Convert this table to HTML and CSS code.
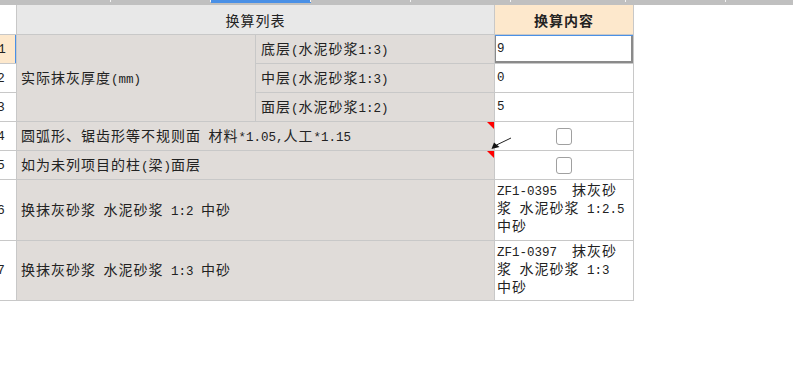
FILE: index.html
```html
<!DOCTYPE html>
<html lang="zh-CN">
<head>
<meta charset="utf-8">
<title>换算列表</title>
<link rel="stylesheet" href="styles.css">
</head>
<body>
<div class="colbar">
  <span class="seg w111"></span>
  <span class="seg"></span>
  <span class="seg active"></span>
  <span class="seg"></span>
  <span class="seg"></span>
  <span class="seg w115"></span>
  <span class="seg"></span>
  <span class="seg rest"></span>
</div>

<div class="sheet">
  <div class="grid">
    <div class="rn head"></div>
    <div class="head span2 center"><span class="t">换算列表</span></div>
    <div class="head peach center bold"><span class="t">换算内容</span></div>

    <div class="rn sel"><span>1</span></div>
    <div class="c merge"><span class="t">实际抹灰厚度<span class="a">(mm)</span></span></div>
    <div class="c sub"><span class="t">底层<span class="a">(</span>水泥砂浆<span class="a">1:3)</span></span></div>
    <div class="v cur"><span class="t a">9</span></div>

    <div class="rn"><span>2</span></div>
    <div class="c sub"><span class="t">中层<span class="a">(</span>水泥砂浆<span class="a">1:3)</span></span></div>
    <div class="v"><span class="t a">0</span></div>

    <div class="rn"><span>3</span></div>
    <div class="c sub"><span class="t">面层<span class="a">(</span>水泥砂浆<span class="a">1:2)</span></span></div>
    <div class="v"><span class="t a">5</span></div>

    <div class="rn"><span>4</span></div>
    <div class="c span2 flag"><span class="t">圆弧形、锯齿形等不规则面<span class="a"> </span>材料<span class="a">*1.05,</span>人工<span class="a">*1.15</span></span></div>
    <div class="v center"><span class="box"></span></div>

    <div class="rn"><span>5</span></div>
    <div class="c span2 flag"><span class="t">如为未列项目的柱<span class="a">(</span>梁<span class="a">)</span>面层</span></div>
    <div class="v center"><span class="box"></span></div>

    <div class="rn"><span>6</span></div>
    <div class="c span2"><span class="t">换抹灰砂浆<span class="a"> </span>水泥砂浆<span class="a"> 1:2 </span>中砂</span></div>
    <div class="v multi"><span class="a">ZF1-0395  </span>抹灰砂浆<span class="a"> </span>水泥砂浆<span class="a"> 1:2.5 </span>中砂</div>

    <div class="rn"><span>7</span></div>
    <div class="c span2"><span class="t">换抹灰砂浆<span class="a"> </span>水泥砂浆<span class="a"> 1:3 </span>中砂</span></div>
    <div class="v multi"><span class="a">ZF1-0397  </span>抹灰砂浆<span class="a"> </span>水泥砂浆<span class="a"> 1:3 </span>中砂</div>
  </div>

  <svg class="pointer" width="24" height="16" viewBox="0 0 24 16">
    <line x1="7.5" y1="9" x2="22" y2="2" stroke="#222" stroke-width="1"/>
    <polygon points="2.5,13 5,6.5 10.5,11" fill="#111"/>
  </svg>
</div>
</body>
</html>
```

FILE: styles.css
```css
html, body {
  margin: 0;
  padding: 0;
  background: #fff;
}

body {
  font-family: "Noto Sans CJK SC", "Noto Sans", sans-serif;
  font-size: 14px;
  letter-spacing: 1px;
  color: #222;
}

/* column header strip of the sheet above */
.colbar {
  display: flex;
  height: 5px;
  background: #c0c0c0;
}

.seg {
  position: relative;
  flex: 0 0 100px;
  height: 5px;
}

.seg::after {
  content: "";
  position: absolute;
  right: 0;
  top: 0;
  width: 1px;
  height: 2px;
  background: #f4f4f4;
}

.seg.w111 { flex-basis: 111px; }
.seg.w115 { flex-basis: 115px; }
.seg.rest { flex: 1 1 auto; }
.seg.rest::after { display: none; }

.seg.active {
  box-shadow: inset 0 3px #4a90e6;
}

/* conversion table */
.sheet {
  position: relative;
}

.grid {
  display: inline-grid;
  grid-template-columns: 16px 238px 238px 138px;
  grid-template-rows: 29px 28px 28px 28px 28px 28px 60px 59px;
  gap: 1px;
  padding: 0 1px 1px 0;
  background: #c8c8c8;
}

.grid > div {
  display: flex;
  align-items: center;
  overflow: hidden;
  white-space: nowrap;
}

.t {
  display: block;
  line-height: 18px;
}

.head {
  background: #e8e8e8;
}

.peach {
  background: #fde8cc;
}

.center {
  justify-content: center;
}

.bold {
  font-weight: 700;
}

.span2 {
  grid-column: span 2;
}

.rn {
  background: #fff;
  font-family: "Liberation Mono", monospace;
  font-size: 13px;
  letter-spacing: 0;
}

.rn span {
  margin-left: -3px;
}

.rn.sel {
  background: #fde8cc;
  box-shadow: inset -1px 0 #4a90e6;
}

.rn.sel span {
  margin-left: -2px;
}

.c {
  background: #e0dcd9;
  padding-left: 4px;
}

.c.sub {
  padding-left: 5px;
}

.merge {
  grid-row: span 3;
}

.flag {
  position: relative;
}

.flag::after {
  content: "";
  position: absolute;
  top: 0;
  right: 0;
  border-top: 7px solid #f00;
  border-left: 7px solid transparent;
}

.v {
  background: #fff;
  padding-left: 2px;
}

.v.center {
  padding-left: 0;
}

.v.cur {
  box-shadow: inset 0 1px #4a90e6, inset 1px 0 #8a8a8a, inset -2px 0 #8a8a8a, inset 0 -2px #8a8a8a;
}

.grid > .v.multi {
  display: block;
  white-space: normal;
  padding: 2px 3px 0 2px;
  line-height: 15px;
}

.a {
  font-family: "Liberation Mono", monospace;
  font-size: 12.5px;
  letter-spacing: 0;
  white-space: pre-wrap;
}

.box {
  width: 14px;
  height: 15px;
  border: 1px solid #a0a0a0;
  border-radius: 3px;
  background: #fff;
}

.pointer {
  position: absolute;
  left: 489px;
  top: 131px;
}
```
